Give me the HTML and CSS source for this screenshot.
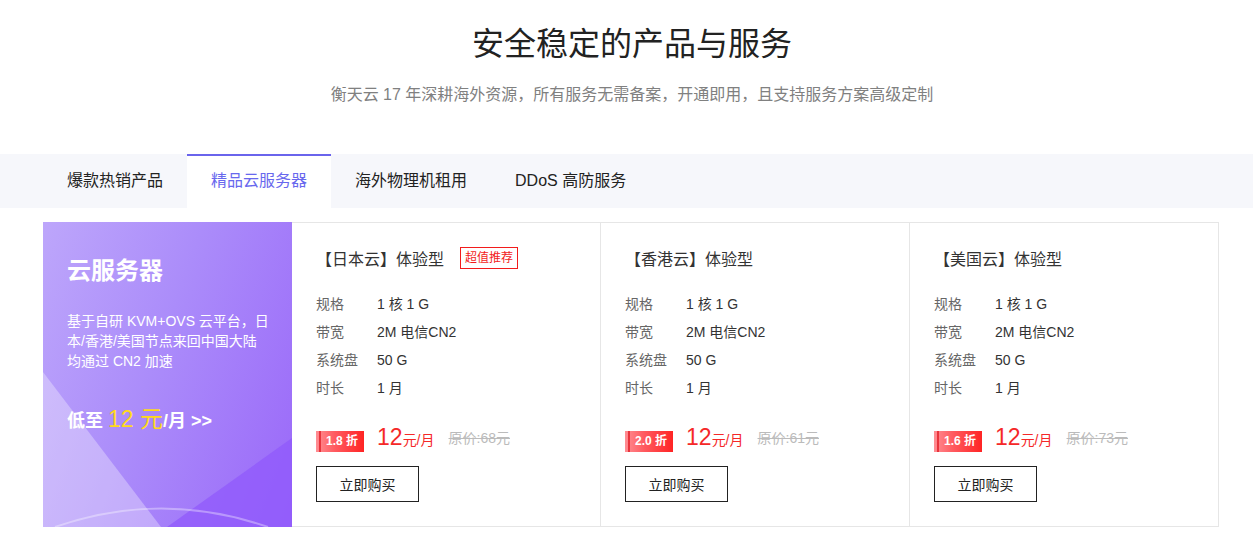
FILE: index.html
```html
<!DOCTYPE html>
<html lang="zh-CN">
<head>
  <meta charset="UTF-8">
  <meta name="viewport" content="width=device-width, initial-scale=1.0">
  <title>安全稳定的产品与服务</title>
  <link rel="stylesheet" href="styles.css">
</head>
<body>

  <section class="products">
    <div class="products-head">
      <h2>安全稳定的产品与服务</h2>
      <p>衡天云 17 年深耕海外资源，所有服务无需备案，开通即用，且支持服务方案高级定制</p>
    </div>

    <div class="tab-bar">
      <ul class="tabs">
        <li>爆款热销产品</li>
        <li class="active">精品云服务器</li>
        <li>海外物理机租用</li>
        <li>DDoS 高防服务</li>
      </ul>
    </div>

    <div class="product-list">
      <div class="promo">
        <svg class="promo-bg" width="249" height="305" viewBox="0 0 249 305">
          <polygon points="0,150 118,305 0,305" fill="#fff" fill-opacity="0.32"/>
          <polygon points="124,305 249,216 249,305" fill="#9059fb" fill-opacity="0.75"/>
          <path d="M 12 305 Q 118 268 225 305" fill="none" stroke="#fff" stroke-opacity="0.35" stroke-width="2"/>
        </svg>
        <h3>云服务器</h3>
        <p>基于自研 KVM+OVS 云平台，日<br>本/香港/美国节点来回中国大陆<br>均通过 CN2 加速</p>
        <div class="promo-price">低至 <em>12 元</em>/月 &gt;&gt;</div>
      </div>

      <div class="plan">
        <div class="plan-title">【日本云】体验型 <span class="tag">超值推荐</span></div>
        <ul class="specs">
          <li><span>规格</span>1 核 1 G</li>
          <li><span>带宽</span>2M 电信CN2</li>
          <li><span>系统盘</span>50 G</li>
          <li><span>时长</span>1 月</li>
        </ul>
        <div class="price-row">
          <span class="discount">1.8 折</span>
          <span class="price"><b>12</b>元/月</span>
          <del>原价:68元</del>
        </div>
        <button type="button" class="buy-btn">立即购买</button>
      </div>

      <div class="plan">
        <div class="plan-title">【香港云】体验型</div>
        <ul class="specs">
          <li><span>规格</span>1 核 1 G</li>
          <li><span>带宽</span>2M 电信CN2</li>
          <li><span>系统盘</span>50 G</li>
          <li><span>时长</span>1 月</li>
        </ul>
        <div class="price-row">
          <span class="discount">2.0 折</span>
          <span class="price"><b>12</b>元/月</span>
          <del>原价:61元</del>
        </div>
        <button type="button" class="buy-btn">立即购买</button>
      </div>

      <div class="plan">
        <div class="plan-title">【美国云】体验型</div>
        <ul class="specs">
          <li><span>规格</span>1 核 1 G</li>
          <li><span>带宽</span>2M 电信CN2</li>
          <li><span>系统盘</span>50 G</li>
          <li><span>时长</span>1 月</li>
        </ul>
        <div class="price-row">
          <span class="discount">1.6 折</span>
          <span class="price"><b>12</b>元/月</span>
          <del>原价:73元</del>
        </div>
        <button type="button" class="buy-btn">立即购买</button>
      </div>
    </div>
  </section>

</body>
</html>
```

FILE: styles.css
```css
/* Reset */
* {
  margin: 0;
  padding: 0;
  box-sizing: border-box;
}

body {
  font-family: "Liberation Sans", "Noto Sans CJK SC", sans-serif;
  color: #333;
  background: #fff;
}

ul {
  list-style: none;
}

/* Heading */
.products-head {
  text-align: center;
  padding: 20px 0 0 11px;
}

.products-head h2 {
  font-size: 32px;
  font-weight: normal;
  line-height: 48px;
  color: #222;
}

.products-head p {
  margin-top: 15px;
  font-size: 16px;
  line-height: 24px;
  color: #808080;
}

/* Tabs */
.tab-bar {
  margin-top: 47px;
  background: #f6f7fb;
}

.tabs {
  display: flex;
  width: 1176px;
  margin-left: 43px;
}

.tabs li {
  padding: 0 24px;
  font-size: 16px;
  line-height: 54px;
  color: #222;
  cursor: pointer;
}

.tabs li.active {
  background: #fff;
  color: #6868ee;
  box-shadow: inset 0 2px 0 #6a64ec;
}

/* Product list */
.product-list {
  display: flex;
  width: 1176px;
  height: 305px;
  margin: 14px 0 0 43px;
}

.promo {
  position: relative;
  width: 249px;
  flex-shrink: 0;
  padding: 34px 12px 0 24px;
  color: #fff;
  background: linear-gradient(110deg, #bda6fb 0%, #ab8cfa 45%, #9a68f9 100%);
  overflow: hidden;
}

.promo-bg {
  position: absolute;
  left: 0;
  top: 0;
}

.promo h3,
.promo p,
.promo-price {
  position: relative;
}

.promo h3 {
  font-size: 24px;
  line-height: 30px;
  font-weight: bold;
}

.promo p {
  margin-top: 25px;
  font-size: 14px;
  line-height: 20px;
  white-space: nowrap;
}

.promo-price {
  margin-top: 33px;
  font-size: 18px;
  line-height: 30px;
  font-weight: bold;
}

.promo-price em {
  font-style: normal;
  font-weight: normal;
  font-size: 23px;
  color: #ffd91a;
}

/* Plan card */
.plan {
  flex: 1;
  display: flex;
  flex-direction: column;
  align-items: flex-start;
  padding: 23px 24px 0;
  border: 1px solid #e6e6e6;
  border-left: none;
}

.plan-title {
  display: flex;
  align-items: center;
  height: 24px;
  font-size: 16px;
  color: #333;
}

.tag {
  margin-left: 16px;
  padding: 0 4px;
  font-size: 12px;
  line-height: 20px;
  color: #f21c1c;
  border: 1px solid #f21c1c;
}

.specs {
  margin-top: 20px;
}

.specs li {
  font-size: 14px;
  line-height: 28px;
  color: #333;
}

.specs li span {
  display: inline-block;
  width: 61px;
  color: #666;
}

/* Price */
.price-row {
  display: flex;
  align-items: flex-start;
  margin-top: 21px;
  height: 30px;
}

.discount {
  position: relative;
  margin-top: 8px;
  padding: 0 6px 0 10px;
  font-size: 12px;
  font-weight: bold;
  line-height: 21px;
  color: #fff;
  background: linear-gradient(90deg, #ff8d93 0%, #ff5a5f 40%, #ff2424 100%);
}

.discount::before {
  content: "";
  position: absolute;
  left: 3px;
  top: 0;
  bottom: 0;
  width: 2px;
  background: #e8343c;
}

.price {
  margin-left: 13px;
  font-size: 14px;
  line-height: 28px;
  color: #f52828;
}

.price b {
  font-size: 23px;
  font-weight: normal;
}

del {
  margin: 5px 0 0 14px;
  font-size: 14px;
  line-height: 20px;
  color: #bbb;
}

/* Button */
.buy-btn {
  margin-top: 13px;
  width: 103px;
  height: 36px;
  font-family: inherit;
  font-size: 14px;
  color: #222;
  background: #fff;
  border: 1px solid #222;
  cursor: pointer;
}
```
